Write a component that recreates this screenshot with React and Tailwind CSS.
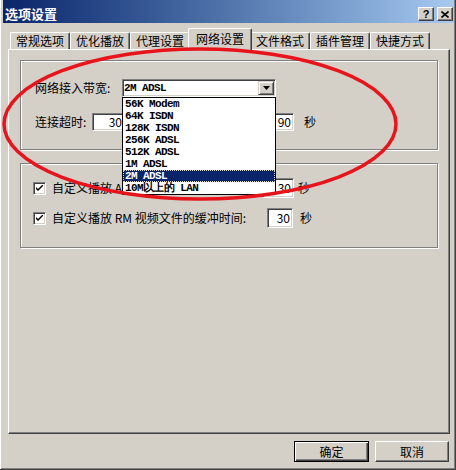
import React from "react";

const tabs = ["常规选项", "优化播放", "代理设置", "网络设置", "文件格式", "插件管理", "快捷方式"];
const speeds = ["56K Modem", "64K ISDN", "128K ISDN", "256K ADSL", "512K ADSL", "1M ADSL", "2M ADSL", "10M以上的 LAN"];

const TitleBtn = ({ children }) => (
  <div className="w-[16px] h-[14px] flex items-center justify-center bg-[#d4d0c8] border border-t-white border-l-white border-r-[#404040] border-b-[#404040] shadow-[inset_-1px_-1px_0_#808080]">
    {children}
  </div>
);

const Sunken = ({ className = "", children }) => (
  <div
    className={
      "bg-white border border-t-[#808080] border-l-[#808080] border-r-white border-b-white shadow-[inset_1px_1px_0_#404040,inset_-1px_-1px_0_#d4d0c8] " +
      className
    }
  >
    {children}
  </div>
);

const Check = () => (
  <div className="w-[13px] h-[13px] shrink-0 bg-white border border-t-[#808080] border-l-[#808080] border-r-white border-b-white shadow-[inset_1px_1px_0_#404040,inset_-1px_-1px_0_#d4d0c8] flex items-center justify-center">
    <svg width="7" height="7" viewBox="0 0 7 7">
      <path d="M0 2 L0 4 L2 6 L7 1 L7 -1 L2 4 Z" fill="#000" />
    </svg>
  </div>
);

export default function App() {
  return (
    <div className="relative w-[456px] h-[470px] overflow-hidden bg-[#d4d0c8] border-r border-b border-[#404040] shadow-[inset_1px_0_0_#ffffff,inset_-1px_-1px_0_#808080] text-black text-[12px] font-[family-name:'Noto_Sans_CJK_SC',sans-serif]">
      {/* title bar */}
      <div className="ml-[3px] mr-[1px] h-[23px] flex bg-linear-to-r from-[#0a246a] to-[#a6caf0] pl-[2px] pr-[1px]">
        <span className="self-center pt-[3px] text-[13px] font-bold text-white leading-none">选项设置</span>
        <div className="ml-auto self-end mb-[2px] flex gap-[3px]">
          <TitleBtn>
            <span className="text-[11px] font-bold leading-none font-[family-name:'Liberation_Sans',sans-serif]">?</span>
          </TitleBtn>
          <TitleBtn>
            <svg width="8" height="7" viewBox="0 0 8 7">
              <path d="M0.5 0.5 L7.5 6.5 M7.5 0.5 L0.5 6.5" stroke="#000" strokeWidth="1.6" />
            </svg>
          </TitleBtn>
        </div>
      </div>

      {/* tabs */}
      <div className="mt-[5px] pl-[10px] h-[21px] flex items-end">
        {tabs.map((t, i) =>
          i === 3 ? (
            <div
              key={t}
              className="relative z-10 -mx-[2px] mb-[-1px] w-[64px] h-[22px] flex items-center justify-center bg-[#d4d0c8] border-t border-l border-white border-r border-r-[#404040] shadow-[inset_-1px_0_0_#808080] rounded-t-[2px] pb-[2px]"
            >
              {t}
            </div>
          ) : (
            <div
              key={t}
              className="w-[60px] h-[17px] flex items-center justify-center border-t border-l border-white border-r border-r-[#404040] shadow-[inset_-1px_0_0_#808080] rounded-t-[2px]"
            >
              {t}
            </div>
          )
        )}
      </div>

      {/* tab panel */}
      <div className="ml-[8px] mr-[5px] h-[385px] border border-t-white border-l-white border-r-[#404040] border-b-[#404040] shadow-[inset_-1px_-1px_0_#808080]">
        {/* group 1 */}
        <div className="mx-[11px] mt-[10px] h-[90px] border border-[#808080] shadow-[1px_1px_0_#ffffff,inset_1px_1px_0_#ffffff] pt-[18px] pl-[14px]">
          <div className="flex items-center h-[18px]">
            <span className="w-[87px]">网络接入带宽:</span>
            <div className="relative z-20">
              <Sunken className="w-[154px] h-[18px] flex items-center">
                <span className="pl-[1px] text-[11px] font-bold tracking-[-0.6px] leading-none font-[family-name:'Liberation_Mono',monospace]">2M ADSL</span>
                <div className="ml-auto mr-[1px] w-[16px] h-[14px] flex items-center justify-center bg-[#d4d0c8] border border-t-[#d4d0c8] border-l-[#d4d0c8] border-r-[#404040] border-b-[#404040] shadow-[inset_1px_1px_0_#ffffff,inset_-1px_-1px_0_#808080]">
                  <svg width="7" height="4" viewBox="0 0 7 4">
                    <path d="M0 0 H7 L3.5 4 Z" fill="#000" />
                  </svg>
                </div>
              </Sunken>
              <div className="absolute left-0 top-full w-[154px] bg-white border border-black text-[11px] font-bold tracking-[-0.6px] font-[family-name:'Liberation_Mono',monospace]">
                {speeds.map((s) => (
                  <div
                    key={s}
                    className={
                      s === "2M ADSL"
                        ? "h-[12px] leading-[12px] pl-[2px] bg-[#0a246a] text-white outline outline-dotted outline-[#d4d0c8] -outline-offset-1"
                        : "h-[12px] leading-[12px] pl-[2px]"
                    }
                  >
                    {s}
                  </div>
                ))}
              </div>
            </div>
          </div>
          <div className="mt-[16px] flex items-center h-[18px]">
            <span className="w-[57px]">连接超时:</span>
            <Sunken className="w-[34px] h-[18px] flex items-center justify-end pr-[3px]">30</Sunken>
            <Sunken className="ml-[128px] w-[40px] h-[18px] flex items-center justify-end pr-[2px]">90</Sunken>
            <span className="ml-[10px]">秒</span>
          </div>
        </div>

        {/* group 2 */}
        <div className="mx-[11px] mt-[13px] h-[85px] border border-[#808080] shadow-[1px_1px_0_#ffffff,inset_1px_1px_0_#ffffff] pt-[14px] pl-[12px]">
          <div className="flex items-center h-[20px]">
            <Check />
            <span className="ml-[6px] w-[70px] overflow-hidden whitespace-nowrap">自定义播放 A</span>
            <Sunken className="ml-[140px] w-[32px] h-[20px] flex items-center justify-end pr-[2px]">30</Sunken>
            <span className="ml-[4px]">秒</span>
          </div>
          <div className="mt-[10px] flex items-center h-[20px]">
            <Check />
            <span className="ml-[6px] w-[215px] whitespace-nowrap">自定义播放 RM 视频文件的缓冲时间:</span>
            <Sunken className="w-[26px] h-[20px] flex items-center justify-end pr-[2px]">30</Sunken>
            <span className="ml-[7px]">秒</span>
          </div>
        </div>
      </div>

      {/* buttons */}
      <div className="mt-[7px] pr-[6px] flex justify-end gap-[6px]">
        <button className="w-[75px] h-[21px] flex items-center justify-center bg-[#d4d0c8] border border-black shadow-[inset_1px_1px_0_#ffffff,inset_-1px_-1px_0_#404040,inset_-2px_-2px_0_#808080]">
          确定
        </button>
        <button className="w-[74px] h-[21px] flex items-center justify-center bg-[#d4d0c8] border border-t-white border-l-white border-r-[#404040] border-b-[#404040] shadow-[inset_-1px_-1px_0_#808080]">
          取消
        </button>
      </div>

      {/* red annotation */}
      <svg className="absolute inset-0 z-30 pointer-events-none" width="456" height="470" viewBox="0 0 456 470">
        <ellipse cx="200" cy="124" rx="196" ry="75" fill="none" stroke="#e8141b" strokeWidth="3.5" />
      </svg>
    </div>
  );
}
